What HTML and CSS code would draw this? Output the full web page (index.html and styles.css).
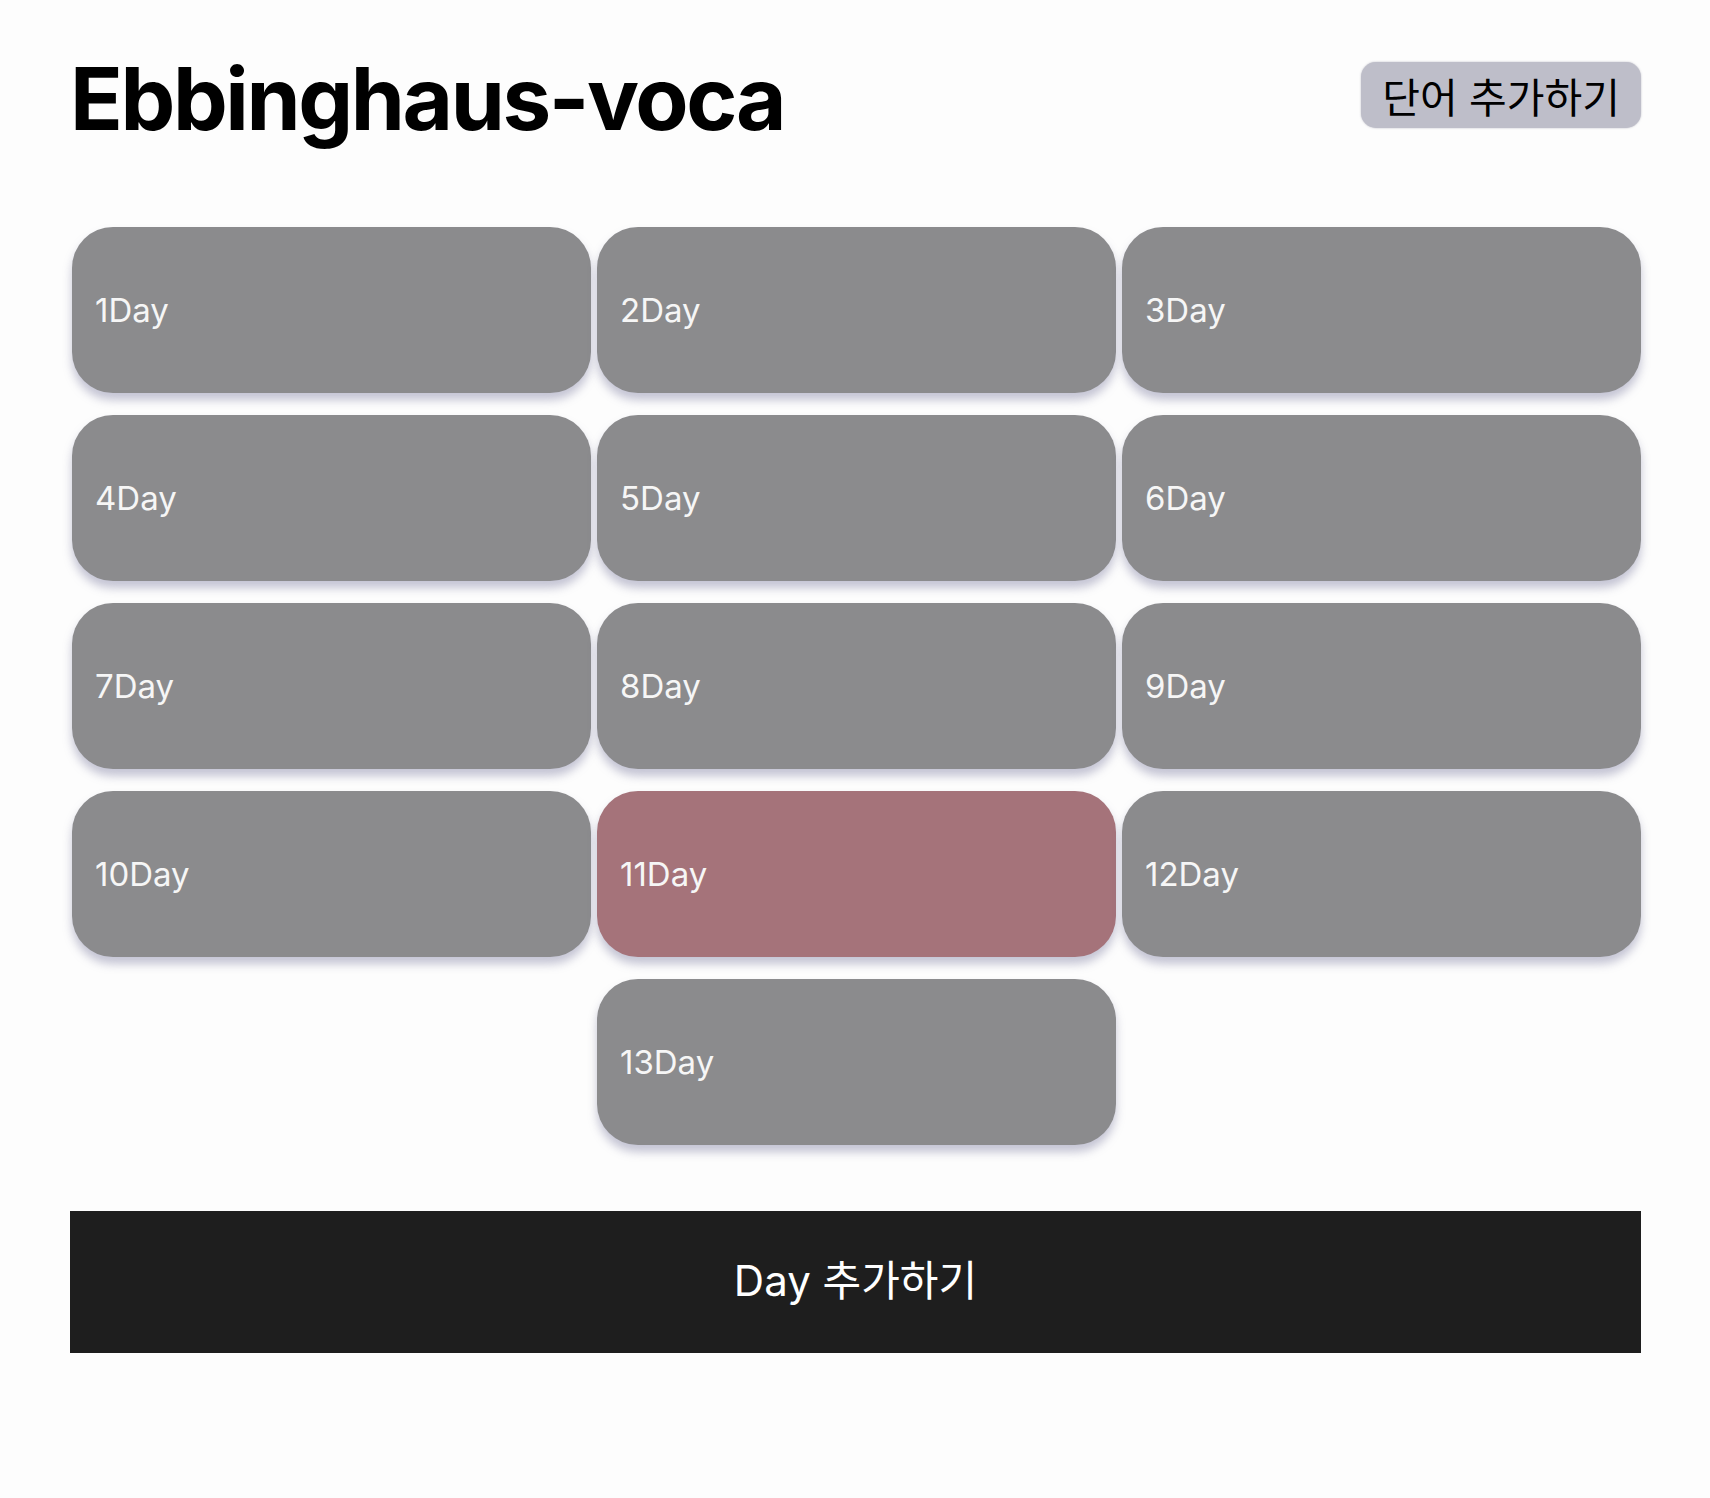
FILE: index.html
```html
<!DOCTYPE html>
<html lang="ko">
<head>
<meta charset="utf-8">
<title>Ebbinghaus-voca</title>
<link rel="stylesheet" href="styles.css">
</head>
<body>
<div class="page">
  <header class="header">
    <h1 class="title">Ebbinghaus-voca</h1>
    <button class="add-word">단어 추가하기</button>
  </header>
  <main class="days">
    <div class="day">1Day</div>
    <div class="day">2Day</div>
    <div class="day">3Day</div>
    <div class="day">4Day</div>
    <div class="day">5Day</div>
    <div class="day">6Day</div>
    <div class="day">7Day</div>
    <div class="day">8Day</div>
    <div class="day">9Day</div>
    <div class="day">10Day</div>
    <div class="day day-active">11Day</div>
    <div class="day">12Day</div>
    <div class="day">13Day</div>
  </main>
  <button class="add-day">Day 추가하기</button>
</div>
</body>
</html>
```

FILE: styles.css
```css
html, body {
  margin: 0;
  padding: 0;
  background: #fdfdfd;
}

body {
  font-family: Inter, "Noto Sans CJK KR", sans-serif;
  color: #000;
}

.page {
  padding: 53px 69px 0 70px;
}

.header {
  display: flex;
  justify-content: space-between;
  align-items: flex-start;
}

.title {
  margin: 0;
  padding-top: 2px;
  font-size: 87px;
  line-height: 88px;
  font-weight: 700;
  letter-spacing: -2.4px;
}

.add-word {
  margin-top: 9px;
  height: 66px;
  padding: 0 21px;
  border: none;
  border-radius: 15px;
  background: #bebec9;
  box-shadow: 0 0 2px rgba(120, 120, 140, 0.5);
  font-family: "Noto Sans CJK KR", sans-serif;
  font-size: 41px;
  color: #000;
  line-height: 66px;
}

.days {
  margin-top: 84px;
  padding-left: 2px;
  display: flex;
  flex-wrap: wrap;
  justify-content: center;
  column-gap: 6px;
  row-gap: 22px;
}

.day {
  box-sizing: border-box;
  width: calc((100% - 12px) / 3);
  height: 166px;
  border-radius: 41px;
  background: #8b8b8d;
  box-shadow: 0 7px 10px rgba(110, 110, 150, 0.4);
  color: #f6f6f6;
  font-size: 33px;
  display: flex;
  align-items: center;
  padding-left: 23px;
}

.day-active {
  background: #a5737a;
}

.add-day {
  display: block;
  width: 100%;
  margin-top: 66px;
  height: 142px;
  padding: 0 0 10px;
  border: none;
  background: #1e1e1e;
  color: #fff;
  font-family: Inter, "Noto Sans CJK KR", sans-serif;
  font-size: 42px;
}
```
